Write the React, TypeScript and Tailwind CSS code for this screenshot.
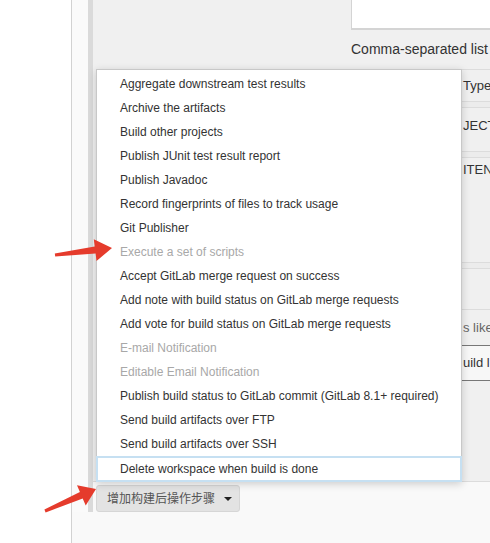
import React from "react";

const items: { label: string; disabled?: boolean }[] = [
  { label: "Aggregate downstream test results" },
  { label: "Archive the artifacts" },
  { label: "Build other projects" },
  { label: "Publish JUnit test result report" },
  { label: "Publish Javadoc" },
  { label: "Record fingerprints of files to track usage" },
  { label: "Git Publisher" },
  { label: "Execute a set of scripts", disabled: true },
  { label: "Accept GitLab merge request on success" },
  { label: "Add note with build status on GitLab merge requests" },
  { label: "Add vote for build status on GitLab merge requests" },
  { label: "E-mail Notification", disabled: true },
  { label: "Editable Email Notification", disabled: true },
  { label: "Publish build status to GitLab commit (GitLab 8.1+ required)" },
  { label: "Send build artifacts over FTP" },
  { label: "Send build artifacts over SSH" },
];

function arrowPoints(
  tx: number,
  ty: number,
  px: number,
  py: number,
  headLen: number,
  headHalf: number,
  tailHalf: number,
  neckHalf: number
) {
  const dx = px - tx;
  const dy = py - ty;
  const len = Math.hypot(dx, dy);
  const ux = dx / len;
  const uy = dy / len;
  const nx = -uy;
  const ny = ux;
  const hx = px - ux * headLen;
  const hy = py - uy * headLen;
  const pts: [number, number][] = [
    [tx + nx * tailHalf, ty + ny * tailHalf],
    [hx + nx * neckHalf, hy + ny * neckHalf],
    [hx + nx * headHalf, hy + ny * headHalf],
    [px, py],
    [hx - nx * headHalf, hy - ny * headHalf],
    [hx - nx * neckHalf, hy - ny * neckHalf],
    [tx - nx * tailHalf, ty - ny * tailHalf],
  ];
  return pts.map((p) => `${p[0].toFixed(1)},${p[1].toFixed(1)}`).join(" ");
}

export default function App() {
  return (
    <div
      className="relative w-[490px] h-[543px] overflow-hidden flex bg-white"
      style={{ fontFamily: '"Liberation Sans", "Noto Sans CJK SC", Arial, sans-serif' }}
    >
      <div className="w-[71px] shrink-0 bg-white" />
      <div className="flex-1 border-l border-[#d2d2d2] bg-[#f9f9f9] flex flex-col">
        <div className="flex items-stretch">
          <div className="w-[16px] shrink-0 bg-[#fafafa]" />
          <div className="w-[5px] shrink-0 bg-[#dadada]" />
          <div className="flex-1 flex flex-col min-w-0">
            <div className="h-[482px] bg-[#f0f0f0] border-b border-[#dcdcdc] pl-[258px] flex flex-col">
              <div className="h-[30px] bg-white border-l border-b-2 border-[#d4d4d4]" />
              <div className="mt-[11px] text-[14px] leading-[16px] text-[#333] whitespace-nowrap">
                Comma-separated list
              </div>
              <div className="mt-[12px] ml-[110px] flex flex-col text-[13px] text-[#333] whitespace-nowrap">
                <div className="h-[33px] border-y border-[#dcdcdc] pl-[2px] flex items-center">Type</div>
                <div className="h-[5px] bg-[#ececec]" />
                <div className="h-[45px] border-y border-[#dcdcdc] pl-[2px] pt-[10px] leading-[16px]">JECT</div>
                <div className="h-[5px] bg-[#ececec]" />
                <div className="h-[106px] border-y border-[#dcdcdc] pl-[2px] pt-[4px] leading-[16px]">ITEN</div>
                <div className="h-[5px] bg-[#ececec]" />
                <div className="h-[42px] border-y border-[#dcdcdc]" />
                <div className="h-[35px] pl-[2px] flex items-center text-[#666]">s like</div>
                <div className="h-[36px] border-y border-[#777] bg-[#f7f7f7] pl-[2px] flex items-center">
                  uild l
                </div>
              </div>
            </div>
            <div className="pt-[3px] pl-[3px]">
              <div className="w-[144px] h-[27px] bg-[#e3e3e3] border border-[#d6d6d6] rounded-[3px] flex items-center pl-[10px] gap-[9px]">
                <span className="text-[12px] leading-[14px] text-[#555]">增加构建后操作步骤</span>
                <span className="w-0 h-0 border-x-[4px] border-x-transparent border-t-[4px] border-t-[#222]" />
              </div>
            </div>
          </div>
        </div>
      </div>

      <div className="absolute left-[96px] top-[69px] w-[366px] bg-white border border-[#c8c8c8] shadow-[0_2px_8px_rgba(0,0,0,0.18)] pt-[2px] flex flex-col">
        {items.map((it) => (
          <div
            key={it.label}
            className={`h-[24px] flex items-center pl-[23px] text-[12px] whitespace-nowrap ${
              it.disabled ? "text-[#a8a8a8]" : "text-[#333]"
            }`}
          >
            {it.label}
          </div>
        ))}
        <div className="h-[26px] -mx-px -mb-px border-2 border-[#c6e0f2] flex items-center pl-[22px] text-[12px] text-[#333] whitespace-nowrap">
          Delete workspace when build is done
        </div>
      </div>

      <svg className="absolute inset-0 pointer-events-none" width="490" height="543" viewBox="0 0 490 543">
        <polygon points={arrowPoints(55, 255, 112, 248, 17, 11, 1.5, 3.5)} fill="#e53b2c" />
        <polygon points={arrowPoints(45, 511, 96, 489, 16, 11, 1.5, 3.5)} fill="#e53b2c" />
      </svg>
    </div>
  );
}
